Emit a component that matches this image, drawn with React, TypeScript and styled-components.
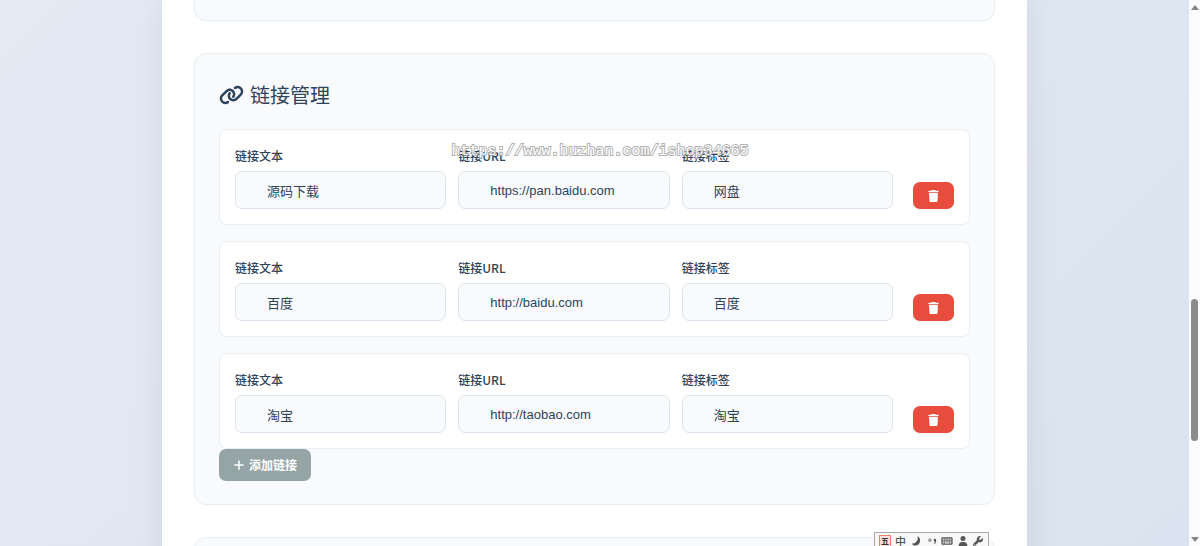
import React, { useState } from "react";
import styled, { createGlobalStyle } from "styled-components";
import { FaKeyboard, FaLink, FaPlus, FaTrash, FaUser, FaWrench } from "react-icons/fa6";

const GlobalStyle = createGlobalStyle`
  *, *::before, *::after { box-sizing: border-box; }
  body {
    margin: 0;
    color: #2f435a;
    font-family: "Liberation Sans", "Noto Sans CJK SC", sans-serif;
  }
`;

const Shell = styled.div`
  display: flex;
  height: 100vh;
  overflow: hidden;
  background: linear-gradient(135deg, #e3eaf4 0%, #e1e8f3 40%, #dae3ef 100%);
`;

const Viewport = styled.main`
  flex: 1;
  min-width: 0;
  overflow: hidden;
`;

const Page = styled.div`
  display: flex;
  flex-direction: column;
  gap: 32px;
  max-width: 865px;
  margin: 0 auto;
  padding: 0 32px;
  background: #fff;
  box-shadow: 0 0 32px rgba(0, 0, 0, 0.08);
`;

const Section = styled.section`
  padding: 24px 24px 23px;
  background: #f8fafc;
  border: 1px solid #e8eff3;
  border-radius: 12px;
`;

const PreviousSection = styled(Section)`
  padding: 20px 0 0;
  border-top: 0;
  border-radius: 0 0 12px 12px;
`;

const Heading = styled.h2`
  display: flex;
  align-items: center;
  gap: 6px;
  margin: 0 0 18px;
  font: 400 20px/33px "Noto Sans CJK SC", sans-serif;
  svg { width: 25px; height: 20px; }
`;

const LinkList = styled.div`
  display: flex;
  flex-direction: column;
  gap: 16px;
`;

const LinkRow = styled.div`
  display: grid;
  grid-template-columns: repeat(3, minmax(0, 1fr)) auto;
  align-items: end;
  gap: 12px;
  padding: 15px;
  background: #fff;
  border: 1px solid #e9eff4;
  border-radius: 8px;
`;

const Field = styled.label`
  display: flex;
  flex-direction: column;
  gap: 4px;
  font: 500 12px/22px "Noto Sans CJK SC", sans-serif;
`;

const TextInput = styled.input`
  width: 100%;
  height: 38px;
  padding: 0 31px;
  color: #2f435a;
  font: 400 13px/20px "Liberation Sans", "Noto Sans CJK SC", sans-serif;
  background: #f8fafc;
  border: 1px solid #dfe4ee;
  border-radius: 7px;
`;

const Button = styled.button<{ $tone: "danger" | "neutral" }>`
  display: inline-flex;
  align-items: center;
  justify-content: center;
  gap: 4px;
  padding: 0 14px;
  height: ${(p) => (p.$tone === "danger" ? "27px" : "32px")};
  margin-left: ${(p) => (p.$tone === "danger" ? "8px" : "0")};
  color: #fff;
  font: 700 ${(p) => (p.$tone === "danger" ? "11px" : "12px")}/20px "Noto Sans CJK SC", sans-serif;
  background: ${(p) => (p.$tone === "danger" ? "#e74c3c" : "#95a5a6")};
  border: 0;
  border-radius: 7px;
  cursor: pointer;
  svg {
    width: ${(p) => (p.$tone === "danger" ? "13px" : "12px")};
    height: 12px;
  }
`;

const Watermark = styled.div`
  position: absolute;
  top: 142px;
  left: 0;
  width: 100%;
  text-align: center;
  color: #fff;
  font: 400 15px/20px "Liberation Mono", monospace;
  -webkit-text-stroke: 2px #a6a6a6;
  paint-order: stroke fill;
  opacity: 0.85;
  pointer-events: none;
`;

const ScrollBar = styled.div`
  display: flex;
  flex-direction: column;
  align-items: center;
  justify-content: space-between;
  width: 11px;
  padding: 5px 0 4px;
  background: #fbfbfb;
  svg { width: 8px; height: 5px; fill: #858585; }
`;

const Track = styled.div`
  display: grid;
  grid-template-rows: 289fr 142fr 96fr;
  flex: 1;
  width: 7px;
`;

const Thumb = styled.div`
  grid-row: 2;
  background: #8b8b8b;
  border-radius: 4px;
`;

const InputMethodBar = styled.div`
  position: absolute;
  right: 211px;
  bottom: 0;
  display: flex;
  align-items: center;
  justify-content: space-between;
  width: 115px;
  height: 14px;
  padding: 2px 4px 0;
  background: #f8f8f8;
  border: 1px solid #a9a9a9;
  border-bottom: 0;
`;

const InputMethodItem = styled.span<{ $active?: boolean }>`
  display: flex;
  align-items: center;
  justify-content: center;
  width: 12px;
  height: 12px;
  font: ${(p) => (p.$active ? "700 8px" : "500 11px")}/12px "Noto Sans CJK SC", sans-serif;
  color: ${(p) => (p.$active ? "#333" : "#555")};
  background: ${(p) => (p.$active ? "#fbe3dd" : "transparent")};
  box-shadow: ${(p) => (p.$active ? "inset 0 0 0 1px #e5806d" : "none")};
  svg { width: 12px; height: 10px; }
`;

const initialLinks = [
  { text: "源码下载", url: "https://pan.baidu.com", tag: "网盘" },
  { text: "百度", url: "http://baidu.com", tag: "百度" },
  { text: "淘宝", url: "http://taobao.com", tag: "淘宝" },
];

type LinkItem = (typeof initialLinks)[number];

const fields: { key: keyof LinkItem; label: string }[] = [
  { key: "text", label: "链接文本" },
  { key: "url", label: "链接URL" },
  { key: "tag", label: "链接标签" },
];

export default function App() {
  const [links, setLinks] = useState<LinkItem[]>(initialLinks);

  const update = (index: number, key: keyof LinkItem, value: string) =>
    setLinks(links.map((link, i) => (i === index ? { ...link, [key]: value } : link)));

  return (
    <>
      <GlobalStyle />
      <Shell>
        <Viewport>
          <Page>
            <PreviousSection />
            <Section>
              <Heading>
                <FaLink />
                链接管理
              </Heading>
              <LinkList>
                {links.map((link, index) => (
                  <LinkRow key={index}>
                    {fields.map(({ key, label }) => (
                      <Field key={key}>
                        {label}
                        <TextInput
                          type="text"
                          value={link[key]}
                          onChange={(e) => update(index, key, e.target.value)}
                        />
                      </Field>
                    ))}
                    <Button
                      type="button"
                      $tone="danger"
                      aria-label="删除链接"
                      onClick={() => setLinks(links.filter((_, i) => i !== index))}
                    >
                      <FaTrash />
                    </Button>
                  </LinkRow>
                ))}
              </LinkList>
              <Button
                type="button"
                $tone="neutral"
                onClick={() => setLinks([...links, { text: "", url: "", tag: "" }])}
              >
                <FaPlus />
                添加链接
              </Button>
            </Section>
            <Section />
          </Page>
        </Viewport>
        <ScrollBar aria-hidden="true">
          <svg viewBox="0 0 8 5"><path d="M4 0 8 5H0Z" /></svg>
          <Track><Thumb /></Track>
          <svg viewBox="0 0 8 5"><path d="M0 0H8L4 5Z" /></svg>
        </ScrollBar>
      </Shell>
      <Watermark>https://www.huzhan.com/ishop34665</Watermark>
      <InputMethodBar>
        <InputMethodItem $active>五</InputMethodItem>
        <InputMethodItem>中</InputMethodItem>
        <InputMethodItem>
          <svg viewBox="0 0 12 12" fill="#555"><path d="M8 0C13 3 11.500 11.500 5 11.500 3 11.500 1.500 10.500 1 9 5 9.500 9 6 8 0Z" /></svg>
        </InputMethodItem>
        <InputMethodItem>
          <svg viewBox="0 0 12 12" fill="#555">
            <circle cx="3.500" cy="5" r="1.500" fill="none" stroke="#555" />
            <path d="M8 4.500a1.500 1.500 0 1 1 3 0.500Q11 9 8 10 9.500 8 9.300 6.400 8 6.300 8 4.500Z" />
          </svg>
        </InputMethodItem>
        <InputMethodItem><FaKeyboard color="#555" /></InputMethodItem>
        <InputMethodItem><FaUser color="#555" /></InputMethodItem>
        <InputMethodItem><FaWrench color="#555" /></InputMethodItem>
      </InputMethodBar>
    </>
  );
}
